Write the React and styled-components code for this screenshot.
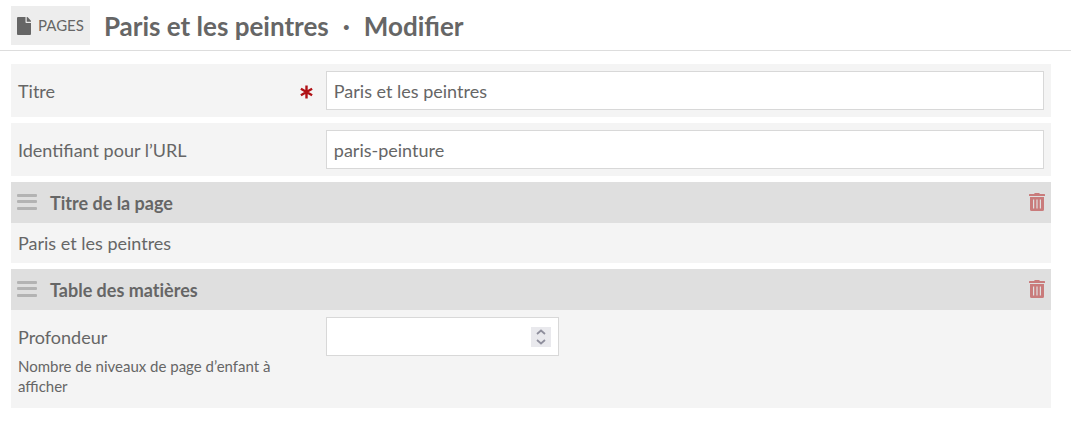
import React, { useState } from 'react'
import styled, { createGlobalStyle } from 'styled-components'

const GlobalStyle = createGlobalStyle`
  * {
    box-sizing: border-box;
  }

  body {
    margin: 0;
    background: #fff;
    color: #666;
    font-family: Lato, 'Liberation Sans', sans-serif;
    font-size: 18px;
    line-height: 27px;
  }

  input,
  button {
    color: inherit;
    font: inherit;
  }
`

const Header = styled.header`
  display: flex;
  align-items: center;
  gap: 14px;
  padding: 6px 11px 5px;
  border-bottom: 1px solid #ddd;
`

const PagesLink = styled.a`
  display: flex;
  align-items: center;
  gap: 7px;
  height: 39px;
  padding: 0 6px;
  background: #ededed;
  color: #666;
  font-size: 15px;
  text-decoration: none;
  text-transform: uppercase;
`

const Title = styled.h1`
  display: flex;
  gap: 14px;
  margin: 0;
  font-size: 26px;
  font-weight: 700;
  line-height: 38px;
`

const Form = styled.form`
  display: flex;
  flex-direction: column;
  gap: 6px;
  padding: 13px 20px 13px 11px;
`

const Field = styled.div`
  display: grid;
  grid-template-columns: 3fr 7fr;
  align-items: start;
  padding: 7px;
  background: #f4f4f4;
`

const FieldLabel = styled.div`
  display: flex;
  align-items: center;
  justify-content: space-between;
  min-height: 39px;
  padding: 2px 13px 0 0;
`

const Required = styled.svg`
  width: 13px;
  height: 14px;
  fill: none;
  stroke: #b01116;
  stroke-width: 2.4;
`

const Help = styled.p`
  margin: 0;
  padding: 0 14px 5px 0;
  font-size: 15px;
  line-height: 20px;
`

const TextInput = styled.input`
  width: 100%;
  height: 39px;
  padding: 0 7px;
  border: 1px solid #d8d8d8;
  border-radius: 0;
  background: #fff;
`

const NumberBox = styled.div`
  display: flex;
  align-items: center;
  width: 233px;
  max-width: 100%;
  height: 39px;
  padding: 0 7px;
  border: 1px solid #d8d8d8;
  background: #fff;
`

const NumberInput = styled.input`
  flex: 1;
  min-width: 0;
  padding: 0;
  border: 0;
  outline: 0;
  background: none;
  appearance: textfield;

  &::-webkit-inner-spin-button {
    appearance: none;
  }
`

const Stepper = styled.div`
  display: flex;
  flex-direction: column;
  width: 20px;
  background: #e9e9ed;
`

const StepButton = styled.button`
  display: flex;
  align-items: center;
  justify-content: center;
  height: 10px;
  padding: 0;
  border: 0;
  background: none;

  svg {
    width: 10px;
    height: 6px;
    fill: none;
    stroke: #8f8f9d;
    stroke-width: 1.8;
  }
`

const BlockHeader = styled.div`
  display: flex;
  align-items: center;
  gap: 13px;
  height: 41px;
  padding: 0 6px;
  background: #dfdfdf;
`

const BlockTitle = styled.h2`
  flex: 1;
  margin: 0;
  padding-top: 2px;
  font-size: 18px;
  font-weight: 700;
  font-variant-ligatures: none;
`

const IconButton = styled.button`
  display: flex;
  padding: 0 0 2px;
  border: 0;
  background: none;
  color: ${props => props.$color};
  cursor: ${props => props.$cursor || 'pointer'};

  svg {
    display: block;
    fill: currentColor;
  }
`

const BlockText = styled.p`
  margin: 0;
  padding: 7px 7px 6px;
  background: #f4f4f4;
`

const FileIcon = () => (
  <svg width="14" height="18" viewBox="0 0 14 18" fill="#666" aria-hidden="true">
    <path d="M1 0h7.5v5.2q0 .8.8.8H14v11q0 1-1 1H1q-1 0-1-1V1q0-1 1-1z" />
    <path d="M9.7 0h.4q.4 0 .7.3l2.9 3.2q.3.3.3.8v.5H9.7z" />
  </svg>
)

const GripIcon = () => (
  <svg width="20" height="18" viewBox="0 0 20 18" aria-hidden="true">
    <rect y="1" width="20" height="3" rx="1" />
    <rect y="7" width="20" height="3" rx="1" />
    <rect y="14" width="20" height="3" rx="1" />
  </svg>
)

const TrashIcon = () => (
  <svg width="16" height="18" viewBox="0 0 16 18" aria-hidden="true">
    <path d="M.6 1H5l.4-.6Q5.6 0 6 0h4q.4 0 .6.4L11 1h4.4q.6 0 .6.6V3H0V1.600Q0 1 .6 1z" />
    <path
      fillRule="evenodd"
      d="M1 4h14v12.500q0 1.500-1.500 1.500h-11Q1 18 1 16.500zM4 6.500v9h1.200v-9zM7.400 6.500v9h1.200v-9zM10.800 6.500v9H12v-9z"
    />
  </svg>
)

const Block = ({ title, children }) => (
  <section>
    <BlockHeader>
      <IconButton type="button" $color="#b3b3b3" $cursor="move" aria-label="Déplacer">
        <GripIcon />
      </IconButton>
      <BlockTitle>{title}</BlockTitle>
      <IconButton type="button" $color="#c97b7b" aria-label="Supprimer">
        <TrashIcon />
      </IconButton>
    </BlockHeader>
    {children}
  </section>
)

const TextField = ({ id, label, required, defaultValue }) => (
  <Field>
    <FieldLabel>
      <label htmlFor={id}>{label}</label>
      {required && (
        <Required viewBox="0 0 13 14" aria-hidden="true">
          <path d="M6.500 0.500v13M0.900 3.700l11.200 6.600M12.100 3.700L0.900 10.300" />
        </Required>
      )}
    </FieldLabel>
    <TextInput id={id} type="text" required={required} defaultValue={defaultValue} />
  </Field>
)

const App = () => {
  const [depth, setDepth] = useState('')

  const step = amount => {
    setDepth(prevDepth => String(Math.max(0, Number(prevDepth) + amount)))
  }

  return (
    <>
      <GlobalStyle />
      <Header>
        <PagesLink href="#pages">
          <FileIcon />
          Pages
        </PagesLink>
        <Title>
          <span>Paris et les peintres</span>
          <span>·</span>
          <span>Modifier</span>
        </Title>
      </Header>
      <Form>
        <TextField id="title" label="Titre" required defaultValue="Paris et les peintres" />
        <TextField id="slug" label="Identifiant pour l’URL" defaultValue="paris-peinture" />
        <Block title="Titre de la page">
          <BlockText>Paris et les peintres</BlockText>
        </Block>
        <Block title="Table des matières">
          <Field>
            <div>
              <FieldLabel>
                <label htmlFor="depth">Profondeur</label>
              </FieldLabel>
              <Help id="depth-help">Nombre de niveaux de page d’enfant à afficher</Help>
            </div>
            <NumberBox>
              <NumberInput
                id="depth"
                type="number"
                min="0"
                aria-describedby="depth-help"
                value={depth}
                onChange={e => setDepth(e.target.value)}
              />
              <Stepper>
                <StepButton type="button" aria-label="Augmenter" onClick={() => step(1)}>
                  <svg viewBox="0 0 10 6">
                    <path d="M1 5l4-3.500L9 5" />
                  </svg>
                </StepButton>
                <StepButton type="button" aria-label="Diminuer" onClick={() => step(-1)}>
                  <svg viewBox="0 0 10 6">
                    <path d="M1 1l4 3.500L9 1" />
                  </svg>
                </StepButton>
              </Stepper>
            </NumberBox>
          </Field>
        </Block>
      </Form>
    </>
  )
}

export default App
